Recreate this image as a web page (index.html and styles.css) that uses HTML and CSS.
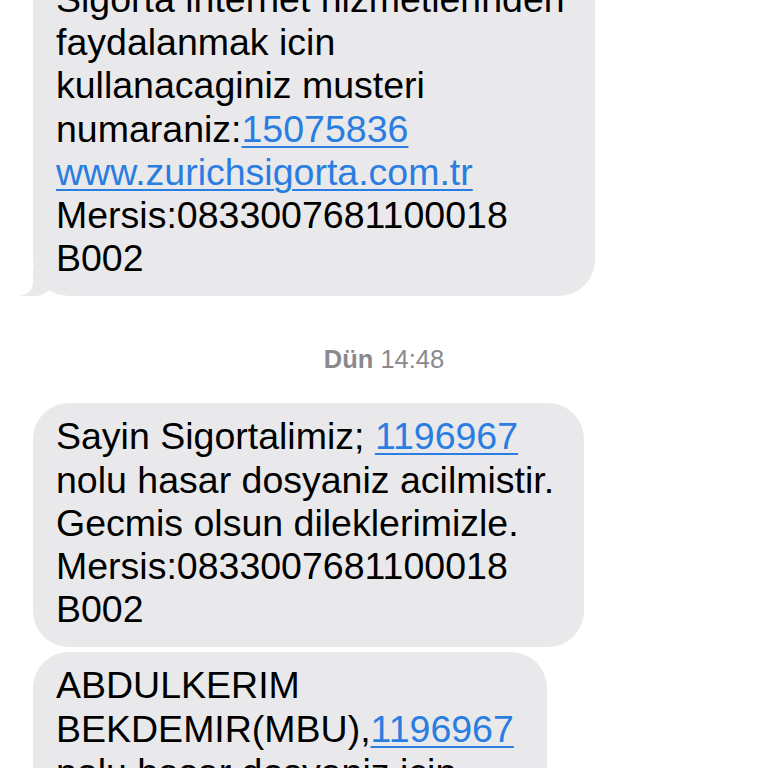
FILE: index.html
```html
<!DOCTYPE html>
<html lang="tr">
<head>
<meta charset="utf-8">
<title>Mesajlar</title>
<link rel="stylesheet" href="styles.css">
</head>
<body>
<main class="thread">
  <div class="bubble bubble-first tail">
    Sigorta internet hizmetlerinden<br>
    faydalanmak icin<br>
    kullanacaginiz musteri<br>
    numaraniz:<a class="link" href="#">15075836</a><br>
    <a class="link" href="#">www.zurichsigorta.com.tr</a><br>
    Mersis:0833007681100018<br>
    B002
  </div>

  <div class="timestamp"><span class="day">Dün</span> 14:48</div>

  <div class="bubble">
    Sayin Sigortalimiz; <a class="link" href="#">1196967</a><br>
    nolu hasar dosyaniz acilmistir.<br>
    Gecmis olsun dileklerimizle.<br>
    Mersis:0833007681100018<br>
    B002
  </div>

  <div class="bubble bubble-wide">
    ABDULKERIM<br>
    BEKDEMIR(MBU),<a class="link" href="#">1196967</a><br>
    nolu hasar dosyaniz icin
  </div>
</main>
</body>
</html>
```

FILE: styles.css
```css
html, body {
  margin: 0;
  padding: 0;
  height: 768px;
  overflow: hidden;
  background: #ffffff;
}

.thread {
  display: flex;
  flex-direction: column;
  align-items: flex-start;
  gap: 5px;
  padding-left: 33px;
  font-family: "Liberation Sans", Arial, sans-serif;
}

.bubble {
  position: relative;
  width: fit-content;
  box-sizing: border-box;
  padding: 12px 30px 16px 23px;
  background: #e9e9eb;
  color: #000000;
  border-radius: 36px;
  font-size: 37.5px;
  line-height: 43.2px;
  white-space: nowrap;
}

.bubble-first {
  margin-top: -34px;
}

.bubble-wide {
  min-width: 514px;
}

.tail::before {
  content: "";
  position: absolute;
  left: -13px;
  bottom: 0;
  width: 34px;
  height: 28px;
  background: #e9e9eb;
  border-bottom-right-radius: 20px 18px;
}

.tail::after {
  content: "";
  position: absolute;
  left: -40px;
  bottom: 0;
  width: 40px;
  height: 28px;
  background: #ffffff;
  border-bottom-right-radius: 15px 13px;
}

.link {
  color: #2a7de1;
  text-decoration: underline;
  text-decoration-thickness: 2px;
  text-underline-offset: 4px;
}

.timestamp {
  align-self: stretch;
  margin-left: -33px;
  padding: 44px 0 25px;
  text-align: center;
  font-size: 25.5px;
  line-height: 28px;
  color: #8a8a8e;
}

.day {
  font-weight: bold;
}
```
